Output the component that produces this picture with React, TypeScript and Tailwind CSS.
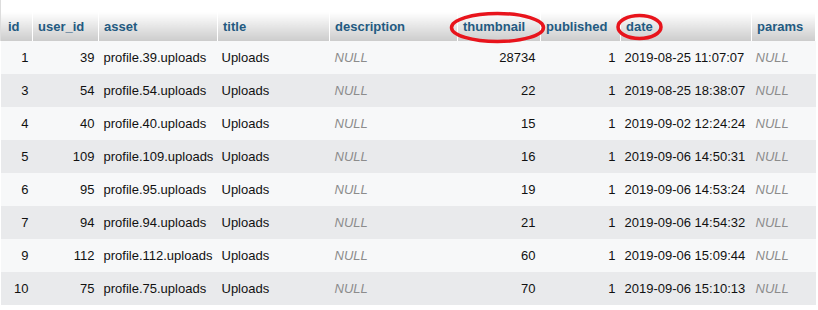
import React from "react";

type Row = {
  id: number;
  user: number;
  asset: string;
  thumb: number;
  date: string;
};

const rows: Row[] = [
  { id: 1, user: 39, asset: "profile.39.uploads", thumb: 28734, date: "2019-08-25 11:07:07" },
  { id: 3, user: 54, asset: "profile.54.uploads", thumb: 22, date: "2019-08-25 18:38:07" },
  { id: 4, user: 40, asset: "profile.40.uploads", thumb: 15, date: "2019-09-02 12:24:24" },
  { id: 5, user: 109, asset: "profile.109.uploads", thumb: 16, date: "2019-09-06 14:50:31" },
  { id: 6, user: 95, asset: "profile.95.uploads", thumb: 19, date: "2019-09-06 14:53:24" },
  { id: 7, user: 94, asset: "profile.94.uploads", thumb: 21, date: "2019-09-06 14:54:32" },
  { id: 9, user: 112, asset: "profile.112.uploads", thumb: 60, date: "2019-09-06 15:09:44" },
  { id: 10, user: 75, asset: "profile.75.uploads", thumb: 70, date: "2019-09-06 15:10:13" },
];

const headers = ["id", "user_id", "asset", "title", "description", "thumbnail", "published", "date", "params"];
const widths = [32, 66, 119, 112, 128, 83, 80, 131, 64];

export default function App() {
  return (
    <div className="relative w-[818px] h-[310px] bg-white overflow-hidden" style={{ fontFamily: '"Liberation Sans", Arial, sans-serif' }}>
      <table className="table-fixed border-collapse w-[815px] text-[13px] leading-[15px]">
        <colgroup>
          {widths.map((w, i) => (
            <col key={i} style={{ width: w }} />
          ))}
        </colgroup>
        <thead>
          <tr className="h-[41px]">
            {headers.map((h, i) => (
              <th
                key={h}
                className={`text-left align-bottom pb-[7px] font-bold text-[#235a81] bg-gradient-to-b from-[#ffffff] from-[30%] to-[#cccccc] border-r border-white ${i === 0 ? "pl-[7px] border-l border-l-[#dddddd]" : "pl-[5px]"}`}
              >
                {h}
              </th>
            ))}
          </tr>
        </thead>
        <tbody className="text-[#111]">
          {rows.map((r, idx) => (
            <tr key={r.id} className={`h-[33px] ${idx % 2 === 0 ? "bg-[#f7f8f9]" : "bg-[#e9eaec]"}`}>
              <td className="text-right pr-[4px]">{r.id}</td>
              <td className="text-right pr-[4px]">{r.user}</td>
              <td className="pl-[5px] whitespace-nowrap">{r.asset}</td>
              <td className="pl-[4px]">Uploads</td>
              <td className="pl-[5px] italic text-[#8c8c8c]">NULL</td>
              <td className="text-right pr-[5px]">{r.thumb}</td>
              <td className="text-right pr-[5px]">1</td>
              <td className="pl-[4px] whitespace-nowrap">{r.date}</td>
              <td className="pl-[4px] italic text-[#8c8c8c]">NULL</td>
            </tr>
          ))}
        </tbody>
      </table>
      <svg className="absolute left-0 top-0 pointer-events-none" width="818" height="310">
        <ellipse cx="497.5" cy="27.5" rx="46" ry="14" fill="none" stroke="#e8141c" strokeWidth="3.5" />
        <ellipse cx="639.5" cy="27" rx="21.5" ry="11.5" fill="none" stroke="#e8141c" strokeWidth="3.5" />
      </svg>
    </div>
  );
}
